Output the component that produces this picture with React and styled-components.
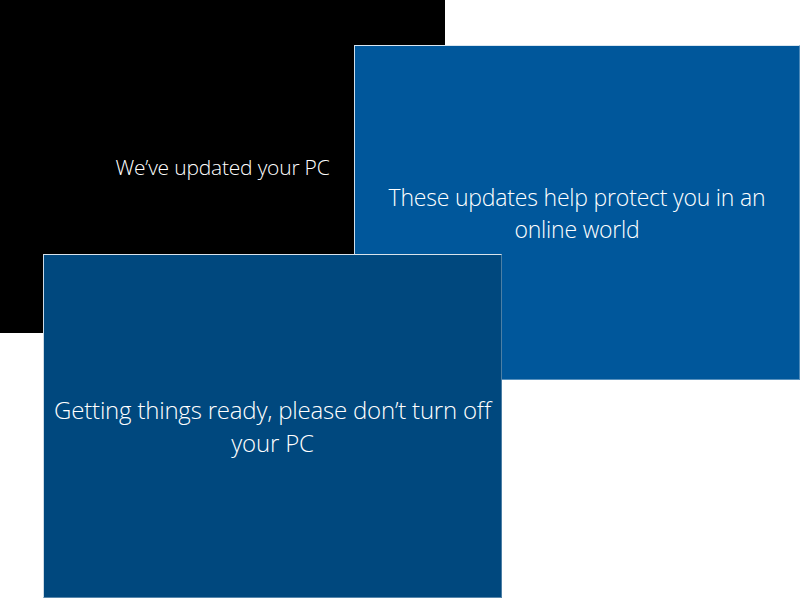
import styled, { createGlobalStyle } from 'styled-components'

const GlobalStyle = createGlobalStyle`
	html, body {
		margin: 0;
		padding: 0;
		background: #ffffff;
	}
`

const Stage = styled.div`
	position: relative;
	width: 800px;
	height: 600px;
	overflow: hidden;
	background: #ffffff;
	font-family: 'Open Sans', 'Liberation Sans', sans-serif;
	font-weight: 300;
`

// each slide is a screen dropped on the collage at its own spot
const Slide = styled.div`
	position: absolute;
	box-sizing: border-box;
	display: flex;
	align-items: center;
	justify-content: center;
	text-align: center;
	color: #ffffff;
	left: ${(p) => p.x}px;
	top: ${(p) => p.y}px;
	width: ${(p) => p.w}px;
	height: ${(p) => p.h}px;
	background: ${(p) => p.bg};
	${(p) => p.framed && `
		border-top: 1px solid rgba(255,255,255,0.85);
		border-left: 1px solid rgba(255,255,255,0.8);
		border-right: 1px solid rgba(255,255,255,0.3);
		border-bottom: 1px solid rgba(255,255,255,0.35);
	`}
`

const Message = styled.p`
	margin: 0;
	font-size: ${(p) => p.size}px;
	line-height: ${(p) => p.lh}px;
	letter-spacing: -0.2px;
`

const App = () => {
	return (
		<>
			<GlobalStyle />
			<Stage>
				<Slide x={0} y={0} w={445} h={333} bg='#000000'>
					<Message size={21} lh={30}>We’ve updated your PC</Message>
				</Slide>
				<Slide x={354} y={45} w={446} h={335} bg='#00579b' framed>
					<Message size={23} lh={32}>
						These updates help protect you in an<br />online world
					</Message>
				</Slide>
				<Slide x={43} y={254} w={459} h={344} bg='#00487e' framed>
					<Message size={24} lh={33}>
						Getting things ready, please don’t turn off<br />your PC
					</Message>
				</Slide>
			</Stage>
		</>
	)
}

export default App
